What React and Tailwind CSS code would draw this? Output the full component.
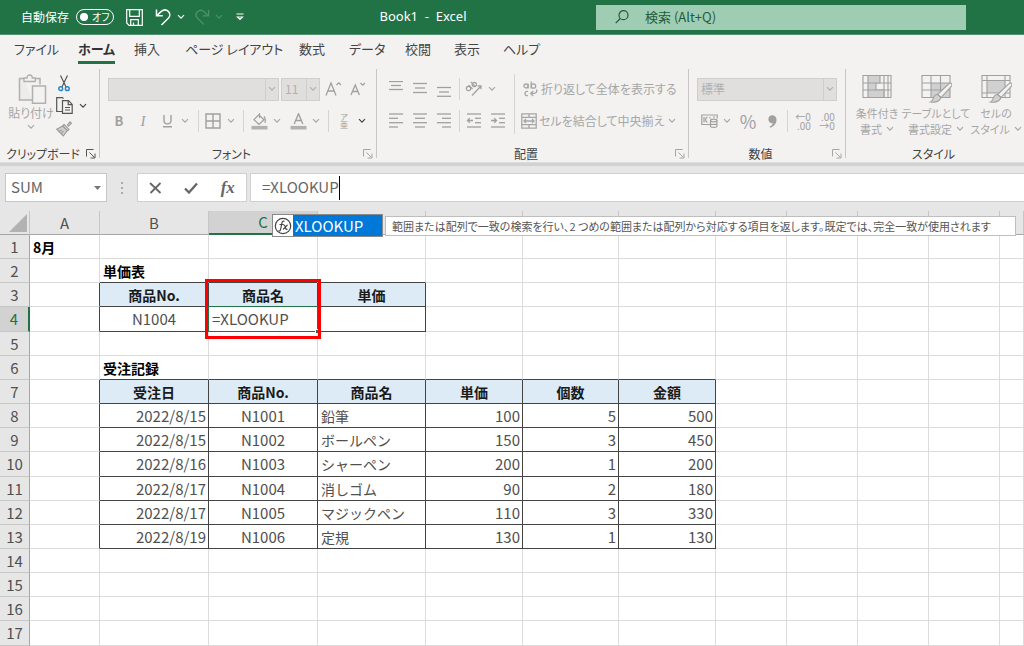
import React, { useState } from 'react'

const columns = [
    { name: 'A', width: 'w-[70px]' },
    { name: 'B', width: 'w-[109px]' },
    { name: 'C', width: 'w-[109px]' },
    { name: 'D', width: 'w-[108px]' },
    { name: 'E', width: 'w-[97px]' },
    { name: 'F', width: 'w-[96px]' },
    { name: 'G', width: 'w-[97px]' },
    { name: 'H', width: 'w-[71px]' },
    { name: 'I', width: 'w-[71px]' },
    { name: 'J', width: 'w-[71px]' },
    { name: 'K', width: 'w-[71px]' },
    { name: 'L', width: '' },
]

// letters that stay readable while the suggestion is open
const openLetters = ['A', 'B', 'C']

const orders = [
    ['2022/8/15', 'N1001', '鉛筆', 100, 5, 500],
    ['2022/8/15', 'N1002', 'ボールペン', 150, 3, 450],
    ['2022/8/16', 'N1003', 'シャーペン', 200, 1, 200],
    ['2022/8/17', 'N1004', '消しゴム', 90, 2, 180],
    ['2022/8/17', 'N1005', 'マジックペン', 110, 3, 330],
    ['2022/8/19', 'N1006', '定規', 130, 1, 130],
]

// cell contents, keyed by address
const cells = {
    A1: { text: '8月', kind: 'title' },
    B2: { text: '単価表', kind: 'title' },
    B3: { text: '商品No.', kind: 'head' },
    C3: { text: '商品名', kind: 'head' },
    D3: { text: '単価', kind: 'head' },
    B4: { text: 'N1004', kind: 'code' },
    C4: { text: '=XLOOKUP', kind: 'edit' },
    D4: { text: '', kind: 'number' },
    B6: { text: '受注記録', kind: 'title' },
}

const orderKinds = ['number', 'code', 'text', 'number', 'number', 'number']
const orderHeads = ['受注日', '商品No.', '商品名', '単価', '個数', '金額']
orderHeads.forEach((text, i) => {
    cells['BCDEFG'[i] + 7] = { text, kind: 'head' }
})
orders.forEach((order, r) => {
    order.forEach((text, i) => {
        cells['BCDEFG'[i] + (8 + r)] = { text, kind: orderKinds[i] }
    })
})

const kindStyles = {
    title: 'text-left text-sm font-bold text-black whitespace-nowrap',
    head: 'text-center text-sm font-bold text-[#1a1a1a] bg-[#ddebf7]',
    code: 'text-center text-[15px] text-[#505050]',
    text: 'text-left text-sm text-[#505050]',
    number: 'text-right text-[15px] text-[#505050]',
    edit: 'text-left text-[15px] text-[#505050]',
}

const isBoxed = (col, row) => {
    const cell = col && cells[col.name + row]
    return Boolean(cell) && cell.kind !== 'title'
}

const tabs = [
    { name: 'ファイル', width: 'w-16' },
    { name: 'ホーム', width: 'w-14' },
    { name: '挿入', width: 'w-[51px]' },
    { name: 'ページ レイアウト', width: 'w-[114px]' },
    { name: '数式', width: 'w-[50px]' },
    { name: 'データ', width: 'w-14' },
    { name: '校閲', width: 'w-[49px]' },
    { name: '表示', width: 'w-[49px]' },
    { name: 'ヘルプ', width: 'w-14' },
]

const Chevron = ({ className = 'text-[#a6a6a6]' }) => (
    <svg width="8" height="6" viewBox="0 0 8 6" className={className} fill="none" stroke="currentColor" strokeWidth="1.2">
        <path d="M1 1.2l3 3 3-3" />
    </svg>
)

const More = ({ label, className }) => (
    <button type="button" aria-label={label} className="flex h-5 w-[18px] shrink-0 items-center justify-center">
        <Chevron className={className} />
    </button>
)

const Tool = ({ label, className = '', children }) => (
    <button
        type="button"
        aria-label={label}
        className={`flex h-6 w-[18px] shrink-0 items-center justify-center text-[#a0a0a0] ${className}`}
    >
        {children}
    </button>
)

const Sep = ({ className = '' }) => <span className={`h-[22px] w-px shrink-0 bg-[#d6d4d2] ${className}`} />

const Launcher = ({ label, dark }) => (
    <button type="button" aria-label={label} className={dark ? 'text-[#555]' : 'text-[#a6a6a6]'}>
        <svg width="10" height="10" viewBox="0 0 10 10" fill="none" stroke="currentColor">
            <path d="M.5 7.5v-7h7M3.5 3.5l5 5M9 4.5v4.5H4.5" />
        </svg>
    </button>
)

const Group = ({ title, launcher, dark, last, className, children }) => (
    <section className={`flex h-24 ${className}`}>
        <div className="flex min-w-0 flex-1 flex-col">
            <div className="h-[72px] pt-2">{children}</div>
            <footer className="mt-2 flex h-4 items-center pr-[3px]">
                <h2 className="flex-1 text-center text-xs whitespace-nowrap text-[#444]">{title}</h2>
                {launcher && <Launcher label={launcher} dark={dark} />}
            </footer>
        </div>
        {!last && <span className="mt-[3px] h-[89px] w-px bg-[#c8c6c4]" />}
    </section>
)

const Picker = ({ label, value, className }) => (
    <span className={`relative flex h-[23px] border border-[#d0cecc] bg-[#e1dfdd] ${className}`}>
        <select
            aria-label={label}
            defaultValue={value}
            disabled
            className="w-full appearance-none bg-transparent pl-[3px] text-xs text-[#b0b0b0] opacity-100"
        >
            <option value={value}>{value}</option>
        </select>
        <span className="pointer-events-none absolute inset-y-0 right-0 flex w-[13px] items-center justify-center border-l border-[#d0cecc]">
            <Chevron className="text-[#b0b0b0]" />
        </span>
    </span>
)

// horizontal strokes given as [x1, x2, y]
const Lines = ({ rows, children }) => (
    <svg width="16" height="16" viewBox="0 0 16 16" fill="none" stroke="currentColor" strokeWidth="1.3">
        {rows.map(([x1, x2, y]) => (
            <path key={y} d={`M${x1} ${y}H${x2}`} />
        ))}
        {children}
    </svg>
)

const TitleBar = () => {
    const [autoSave, setAutoSave] = useState(false)

    return (
        <header className="flex h-[35px] items-center border-b border-[#4f9070] bg-[#217346] text-white">
            <div className="flex w-[250px] shrink-0 items-center pl-[21px]">
                <label className="flex items-center gap-[7px] text-xs">
                    自動保存
                    <input
                        type="checkbox"
                        className="sr-only"
                        checked={autoSave}
                        onChange={(e) => setAutoSave(e.target.checked)}
                    />
                    <span className="flex h-4 w-[38px] items-center gap-1 rounded-full border border-white pl-[3px] text-[10px]">
                        <span className="size-2 rounded-full bg-white" />
                        {autoSave ? 'オン' : 'オフ'}
                    </span>
                </label>
                <button type="button" aria-label="上書き保存" className="ml-3">
                    <svg width="17" height="17" viewBox="0 0 17 17" fill="none" stroke="currentColor" strokeWidth="1.2">
                        <path d="M.7.7h15.6v15.6H3L.7 14z" />
                        <path d="M3.7.7v6.6h9.6V.7M4.7 16.3v-5.6h7.6v5.6M7.5 16v-2.5" />
                    </svg>
                </button>
                <button type="button" aria-label="元に戻す" className="ml-3">
                    <svg width="17" height="18" viewBox="0 0 17 18" fill="none" stroke="currentColor" strokeWidth="1.5">
                        <path d="M1.5 1.5v6.3h6.3" />
                        <path d="M1.8 7.6L6 3.6c2.4-2 5.4-2 7.3-.2 2 2 2 4.8 0 6.800L6.5 17" />
                    </svg>
                </button>
                <More label="元に戻すの一覧" className="text-white" />
                <button type="button" aria-label="やり直し" className="ml-1 text-[#4d9069]">
                    <svg width="16" height="18" viewBox="0 0 17 18" fill="none" stroke="currentColor" strokeWidth="1.4">
                        <path d="M15.5 1.5v6.3H9.2" />
                        <path d="M15.2 7.6L11 3.600c-2.4-2-5.4-2-7.3-.2-2 2-2 4.800 0 6.800L10.500 17" />
                    </svg>
                </button>
                <More label="やり直しの一覧" className="text-[#4d9069]" />
                <button type="button" aria-label="クイック アクセス ツール バーのカスタマイズ" className="ml-2">
                    <svg width="8" height="8" viewBox="0 0 8 8" fill="none" stroke="currentColor" strokeWidth="1.2">
                        <path d="M.5 1h7M1.5 4h5L4 6.500z" />
                    </svg>
                </button>
            </div>
            <h1 className="flex-1 text-center font-['Noto_Sans','Noto_Sans_CJK_JP',sans-serif] text-[13px] whitespace-pre">
                Book1  -  Excel
            </h1>
            <label className="mr-[58px] flex h-[25px] w-[370px] items-center gap-4 bg-[#9fcdb3] pl-[19px] text-[#1f5c3a]">
                <svg width="14" height="14" viewBox="0 0 14 14" fill="none" stroke="currentColor" strokeWidth="1.2">
                    <circle cx="8.5" cy="5.2" r="4.5" />
                    <path d="M5.3 8.5L.7 13.2" />
                </svg>
                <input
                    type="search"
                    aria-label="検索"
                    placeholder="検索 (Alt+Q)"
                    className="min-w-0 flex-1 text-[13px] outline-none placeholder:text-[#1f5c3a]"
                />
            </label>
        </header>
    )
}

const Tabs = () => (
    <nav className="flex h-[31px] items-center pl-[14px] text-[13px] text-[#444]">
        {tabs.map((tab) => (
            <span key={tab.name} className={`shrink-0 ${tab.width}`}>
                <button
                    type="button"
                    className={
                        tab.name === 'ホーム'
                            ? 'h-[27px] border-b-[3px] border-[#217346] font-bold whitespace-nowrap text-[#333]'
                            : 'h-[27px] border-b-[3px] border-transparent whitespace-nowrap'
                    }
                >
                    {tab.name}
                </button>
            </span>
        ))}
    </nav>
)

const Clipboard = () => (
    <Group title="クリップボード" launcher="クリップボードの設定" dark className="w-[100px] shrink-0">
        <div className="flex pl-2">
            <button type="button" className="flex w-[46px] flex-col items-center text-xs text-[#a6a6a6]">
                <svg width="32" height="31" viewBox="0 0 32 31" fill="none" stroke="#b0b0b0">
                    <path d="M9 4.500H4.500v21.500H17M20 4.500h5v6" strokeWidth="1.500" fill="#ececeb" />
                    <path d="M9 7.500V4h3c0-2 1.200-3 2.700-3s2.600 1 2.600 3h3v3.500z" strokeWidth="1.300" fill="#f3f2f1" />
                    <path d="M17.500 12h13v17.300h-13z" strokeWidth="1.500" fill="#f3f2f1" />
                </svg>
                <span className="leading-4 whitespace-nowrap">貼り付け</span>
                <span className="flex h-3 items-center">
                    <Chevron />
                </span>
            </button>
            <div className="flex flex-col gap-px">
                <button type="button" aria-label="切り取り" className="flex h-[18px] w-5 items-center justify-center">
                    <svg width="12" height="17" viewBox="0 0 12 17" fill="none" strokeWidth="1.2">
                        <path d="M2.5.5l5.7 11.700M9.500.5L3.800 12.200" stroke="#555" />
                        <circle cx="2.700" cy="13.700" r="1.900" stroke="#2b88c9" strokeWidth="1.500" />
                        <circle cx="9.300" cy="13.700" r="1.900" stroke="#2b88c9" strokeWidth="1.500" />
                    </svg>
                </button>
                <div className="flex h-[25px] items-center">
                    <button type="button" aria-label="コピー" className="flex w-5 justify-center">
                        <svg width="17" height="17" viewBox="0 0 17 17" fill="none" stroke="#555" strokeWidth="1.200">
                            <path d="M6 14.500H.7V.7h5.800l1 1" />
                            <path d="M6.500 3.700h6l3.700 3.700v8.900H6.500z" />
                            <path d="M12.200 4v3.700H16M9 10.500h5M9 13h5" />
                        </svg>
                    </button>
                    <More label="コピーの一覧" className="text-[#444]" />
                </div>
                <button type="button" aria-label="書式のコピー/貼り付け" className="flex h-5 w-5 items-center justify-center">
                    <svg width="16" height="16" viewBox="0 0 16 16" fill="none" stroke="#999" strokeWidth="1.100">
                        <path d="M11 4.500l3-3.700 1.500 1.500L12 5.500" fill="#d8d8d8" />
                        <path d="M8 3.500l5 5-1.300 1.300-5-5z" fill="#f3f2f1" />
                        <path d="M6.700 5L.8 8.300l6.500 6.700 4-5.500z" fill="#cfcfcf" />
                        <path d="M3 10.500l2.800-1.500M5 12.700l2.500-2.500" />
                    </svg>
                </button>
            </div>
        </div>
    </Group>
)

const FontGroup = () => (
    <Group title="フォント" launcher="フォントの設定" className="w-[277px] shrink-0">
        <div className="flex h-[30px] items-center pl-2">
            <Picker label="フォント名" value="" className="w-[171px]" />
            <Picker label="フォント サイズ" value="11" className="ml-0.5 w-[39px]" />
            <Tool label="フォント サイズの拡大" className="ml-1">
                <svg width="17" height="16" viewBox="0 0 17 16" fill="none" stroke="currentColor" strokeWidth="1.3">
                    <path d="M1 14.500L6 2l5 12.500M2.800 10h6.400M11.500 4l2.300-2.200L16 4" />
                </svg>
            </Tool>
            <Tool label="フォント サイズの縮小" className="ml-[7px]">
                <svg width="16" height="14" viewBox="0 0 16 14" fill="none" stroke="currentColor" strokeWidth="1.3">
                    <path d="M1 13l4.200-10 4.200 10M2.500 9.500h5.400M10.500 1l2.200 2.200L15 1" />
                </svg>
            </Tool>
        </div>
        <div className="flex h-[34px] items-center pl-[10px]">
            <Tool label="太字">
                <span className="text-[13px] font-bold">B</span>
            </Tool>
            <Tool label="斜体" className="ml-1.5">
                <span className="font-['Liberation_Serif',serif] text-[15px] italic">I</span>
            </Tool>
            <Tool label="下線" className="ml-1.5">
                <svg width="11" height="14" viewBox="0 0 11 14" fill="none" stroke="currentColor" strokeWidth="1.4">
                    <path d="M2 1v5.500c0 4.500 7 4.500 7 0V1M1 12.700h9" />
                </svg>
            </Tool>
            <More label="下線の種類" />
            <Sep className="ml-1" />
            <Tool label="罫線" className="ml-[5px]">
                <svg width="16" height="16" viewBox="0 0 16 16" fill="none" stroke="currentColor" strokeWidth="1.4">
                    <path d="M1 1h14v14H1zM8 1v14M1 8h14" />
                </svg>
            </Tool>
            <More label="罫線の種類" />
            <Sep className="ml-[3px]" />
            <Tool label="塗りつぶしの色" className="ml-1.5">
                <svg width="17" height="17" viewBox="0 0 17 17" fill="none" stroke="currentColor" strokeWidth="1.2">
                    <path d="M8 2l5 4.700-5 4.800-5-4.800L8.500 1v4M13 3.500c1.500 1.500 1.500 4 1 6.500" />
                    <path d="M.5 14.700h16" stroke="#b3b0ad" strokeWidth="3.6" />
                </svg>
            </Tool>
            <More label="塗りつぶしの色の一覧" />
            <Tool label="フォントの色" className="ml-[3px]">
                <svg width="17" height="17" viewBox="0 0 17 17" fill="none" stroke="currentColor" strokeWidth="1.4">
                    <path d="M4.200 11L8.500.8 12.800 11M5.800 7.500h5.400" />
                    <path d="M.5 14.700h16" stroke="#b3b0ad" strokeWidth="3.6" />
                </svg>
            </Tool>
            <More label="フォントの色の一覧" />
            <Sep className="ml-[3px]" />
            <Tool label="ふりがな" className="ml-1.5">
                <span className="flex flex-col items-center text-[8px] leading-[8px]">
                    <span>ア</span>
                    <span>亜</span>
                </span>
            </Tool>
            <More label="ふりがなの設定" className="text-[#444]" />
        </div>
    </Group>
)

const Alignment = () => (
    <Group title="配置" launcher="配置の設定" className="w-[312px] shrink-0">
        <div className="flex">
            <div className="pl-[10px]">
                <div className="flex h-[30px] items-center">
                    <Tool label="上揃え">
                        <Lines rows={[[1, 15, 0.5], [3, 13, 4.5], [1, 15, 8.5]]} />
                    </Tool>
                    <Tool label="上下中央揃え" className="ml-1.5">
                        <Lines rows={[[1, 15, 2.5], [3, 13, 7], [1, 15, 11.5]]} />
                    </Tool>
                    <Tool label="下揃え" className="ml-1.5">
                        <Lines rows={[[1, 15, 6.5], [3, 13, 11], [1, 15, 15.3]]} />
                    </Tool>
                    <Sep className="ml-1.5" />
                    <Tool label="方向" className="ml-[5px]">
                        <svg width="18" height="16" viewBox="0 0 18 16" fill="none" stroke="currentColor" strokeWidth="1.2">
                            <circle cx="3.500" cy="7.500" r="2.200" />
                            <path d="M3.500 4l4 4M5.800.8l4.800 5" />
                            <circle cx="9.300" cy="3.500" r="2.100" />
                            <path d="M7 14.500L16 5M12.500 4.800H16v3.500" />
                        </svg>
                    </Tool>
                    <More label="方向の一覧" />
                </div>
                <div className="flex h-[34px] items-center">
                    <Tool label="左揃え">
                        <Lines rows={[[1, 15, 1], [1, 10, 5.3], [1, 15, 9.7], [1, 10, 14]]} />
                    </Tool>
                    <Tool label="中央揃え" className="ml-1.5">
                        <Lines rows={[[1, 15, 1], [3, 13, 5.3], [1, 15, 9.7], [3, 13, 14]]} />
                    </Tool>
                    <Tool label="右揃え" className="ml-1.5">
                        <Lines rows={[[1, 15, 1], [6, 15, 5.3], [1, 15, 9.7], [6, 15, 14]]} />
                    </Tool>
                    <Sep className="ml-1.5" />
                    <Tool label="インデントを減らす" className="ml-[5px]">
                        <Lines rows={[[1, 15, 1], [9, 15, 5.3], [9, 15, 9.7], [1, 15, 14]]}>
                            <path d="M7 7.500H1.500M3.800 5.300L1.500 7.500l2.300 2.300" />
                        </Lines>
                    </Tool>
                    <Tool label="インデントを増やす" className="ml-1.5">
                        <Lines rows={[[1, 15, 1], [9, 15, 5.3], [9, 15, 9.7], [1, 15, 14]]}>
                            <path d="M1 7.500h5.500M4.200 5.300l2.300 2.200-2.300 2.300" />
                        </Lines>
                    </Tool>
                </div>
            </div>
            <span className="ml-[7px] h-[60px] w-px bg-[#d6d4d2]" />
            <div className="pl-1.5 text-xs text-[#a6a6a6]">
                <button type="button" className="flex h-[30px] items-center gap-0.5 whitespace-nowrap">
                    <span className="flex w-[18px] justify-center">
                        <svg width="15" height="16" viewBox="0 0 15 16" fill="none" stroke="currentColor" strokeWidth="1.3">
                            <circle cx="3" cy="5" r="2" />
                            <path d="M5.200 2.700v4.800M8.200.5v7" />
                            <circle cx="10.500" cy="5" r="2.200" />
                            <path d="M5 10.500c-4-1.500-4 5.500 0 4M13.500 8.500c1 2.500 0 4-5.500 4M10.200 10l-2.500 2.500 2.500 2.500" />
                        </svg>
                    </span>
                    折り返して全体を表示する
                </button>
                <div className="flex h-[34px] items-center">
                    <button type="button" className="flex w-[142px] items-center gap-0.5 whitespace-nowrap">
                        <span className="flex w-[18px] justify-center">
                            <svg width="16" height="16" viewBox="0 0 16 16" fill="none" stroke="currentColor" strokeWidth="1.3">
                                <path d="M.8.8h14.400v14.400H.8zM.8 4.300h14.400M.8 11.700h14.400M8 .8v3.500M8 11.700v3.500" />
                                <path d="M3 8h10M5 6L3 8l2 2M11 6l2 2-2 2" />
                            </svg>
                        </span>
                        セルを結合して中央揃え
                    </button>
                    <More label="セル結合の一覧" />
                </div>
            </div>
        </div>
    </Group>
)

const NumberGroup = () => (
    <Group title="数値" launcher="表示形式の設定" className="w-[157px] shrink-0">
        <div className="flex h-[30px] items-center pl-2">
            <Picker label="表示形式" value="標準" className="w-[140px]" />
        </div>
        <div className="flex h-[34px] items-center pl-[11px]">
            <Tool label="通貨表示形式">
                <svg width="17" height="14" viewBox="0 0 17 14" fill="none" stroke="currentColor" strokeWidth="1.2">
                    <path d="M9 10.500H.8V1h15.400v3.500M3 3v5.500M6.500 3.300c-2.500-.3-2.500 5 0 4.700M9 3v1.500M12 3h2" />
                    <ellipse cx="12.700" cy="6.500" rx="3.200" ry="1.300" />
                    <path d="M9.500 6.500v5.700c0 1.500 6.400 1.500 6.400 0V6.500M9.500 9.500c0 1.300 6.400 1.300 6.400 0" />
                </svg>
            </Tool>
            <More label="通貨の一覧" />
            <Tool label="パーセント スタイル" className="ml-[3px]">
                <span className="text-lg">%</span>
            </Tool>
            <Tool label="桁区切りスタイル" className="ml-1.5">
                <svg width="9" height="13" viewBox="0 0 9 13" fill="currentColor">
                    <path d="M4 .3c2.700 0 4.500 1.700 4.500 4.500 0 3.800-2.500 6.700-6.500 8l-.5-1c2-1 3.100-2.200 3.300-3.500C2.400 8.500.4 6.800.4 4.200.4 2 2 .3 4 .3z" />
                </svg>
            </Tool>
            <Sep className="ml-1.5" />
            <Tool label="小数点以下の表示桁数を増やす" className="ml-1.5">
                <span className="flex flex-col items-end text-[10px] leading-[9px]">
                    <span>←0</span>
                    <span>.00</span>
                </span>
            </Tool>
            <Tool label="小数点以下の表示桁数を減らす" className="ml-1.5">
                <span className="flex flex-col items-end text-[10px] leading-[9px]">
                    <span>.00</span>
                    <span>→0</span>
                </span>
            </Tool>
        </div>
    </Group>
)

const StyleButton = ({ lines, className, children }) => (
    <button
        type="button"
        className={`flex shrink-0 flex-col items-center text-[11px] leading-4 whitespace-nowrap text-[#a6a6a6] ${className}`}
    >
        <svg width="32" height="31" viewBox="0 0 32 31" fill="none" stroke="#a0a0a0" strokeWidth="1.1">
            {children}
        </svg>
        <span>{lines[0]}</span>
        <span className="flex items-center gap-1">
            {lines[1]}
            <Chevron />
        </span>
    </button>
)

const Brush = () => (
    <>
        <path d="M31.500 9.500c.8.800.7 1.800 0 2.700L21 23.500l-3.500-3L29 9.700c.8-.8 1.700-.8 2.500-.2z" fill="#f3f2f1" />
        <path d="M17.500 20.500l3.500 3c-1.500 4-5.500 5.300-10.500 4.500 2.500-1 2.300-3 3.300-5 .7-1.700 2-2.700 3.700-2.500z" fill="#d0d0d0" />
    </>
)

const StyleGroup = () => (
    <Group title="スタイル" last className="min-w-[178px] flex-1 overflow-hidden">
        <div className="flex pl-0.5">
            <StyleButton lines={['条件付き', '書式']} className="w-[58px]">
                <path d="M2 1.500h28v22H2zM2 9h28M2 16h28M23 1.500v22M27 1.500v22" />
                <path d="M7 1.500h12V9h-4v7h8v7.500H7z" fill="#d0d0d0" />
                <path d="M7 9h8M7 16h8" />
            </StyleButton>
            <StyleButton lines={['テーブルとして', '書式設定']} className="w-[60px]">
                <path d="M11 9h19v14.500H11z" fill="#d0d0d0" stroke="none" />
                <path d="M2 1.500h28v22H2zM2 9h28M2 16h28M11 1.500v22M20.500 1.500v22" />
                <Brush />
            </StyleButton>
            <StyleButton lines={['セルの', 'スタイル']} className="w-[60px]">
                <path d="M7 6.500h18V19H7z" fill="#d0d0d0" stroke="none" />
                <path d="M2 1.500h28v22H2zM2 6.500h28M2 19h28M7 1.500v22M25 1.500v22" />
                <Brush />
            </StyleButton>
        </div>
    </Group>
)

const FormulaBar = ({ formula, setFormula }) => (
    <div className="flex h-[45px] items-start bg-[#e6e6e6] pt-[7px] pl-[5px] text-[15px] text-[#666]">
        <div className="flex h-[29px] w-[102px] shrink-0 items-center border border-[#c6c6c6] bg-white px-[5px]">
            <input aria-label="名前ボックス" defaultValue="SUM" className="min-w-0 flex-1 outline-none" />
            <button type="button" aria-label="名前の一覧">
                <svg width="7" height="4" viewBox="0 0 7 4" fill="#777">
                    <path d="M0 0h7L3.500 4z" />
                </svg>
            </button>
        </div>
        <span className="flex h-[29px] w-[30px] shrink-0 flex-col items-center justify-center gap-[3px]">
            <span className="size-0.5 bg-[#aaa]" />
            <span className="size-0.5 bg-[#aaa]" />
            <span className="size-0.5 bg-[#aaa]" />
        </span>
        <div className="flex h-[29px] w-[110px] shrink-0 items-center justify-around border border-[#d0d0d0] bg-white">
            <button type="button" aria-label="キャンセル">
                <svg width="13" height="12" viewBox="0 0 13 12" fill="none" stroke="#666" strokeWidth="1.8">
                    <path d="M1 1l10.500 10M11.500 1L1.500 11" />
                </svg>
            </button>
            <button type="button" aria-label="入力">
                <svg width="14" height="12" viewBox="0 0 14 12" fill="none" stroke="#666" strokeWidth="2.3">
                    <path d="M1 6.500l4 4L13 1.500" />
                </svg>
            </button>
            <button
                type="button"
                aria-label="関数の挿入"
                className="font-['Liberation_Serif',serif] text-[17px] leading-5 font-bold italic"
            >
                fx
            </button>
        </div>
        <div className="ml-[3px] flex h-[29px] flex-1 items-center border border-r-0 border-[#d0d0d0] bg-white pl-[11px]">
            <input
                aria-label="数式バー"
                value={formula}
                onChange={(e) => setFormula(e.target.value)}
                className="field-sizing-content outline-none"
            />
            <span className="h-6 w-px bg-black" />
        </div>
    </div>
)

const Cell = ({ col, next, row, formula }) => {
    const cell = cells[col.name + row]
    const right = isBoxed(col, row) || isBoxed(next, row) ? 'border-r-[#444]' : 'border-r-[#dcdcdc]'
    const bottom = isBoxed(col, row) || isBoxed(col, row + 1) ? 'border-b-[#444]' : 'border-b-[#dcdcdc]'
    const padding = cell && cell.kind === 'number' ? 'px-0.5' : 'px-[3px]'

    return (
        <td className={`relative border-r border-b py-0 leading-5 ${padding} ${right} ${bottom} ${cell ? kindStyles[cell.kind] : ''}`}>
            {cell && cell.kind === 'edit' ? formula : cell && cell.text}
            {cell && cell.kind === 'edit' && (
                <>
                    <span className="absolute -inset-px z-10 border border-[#217346]" />
                    <span className="absolute -right-0.5 -bottom-0.5 z-10 size-1 border-t border-l border-white bg-[#217346]" />
                    <span className="absolute -inset-x-1 -top-7 -bottom-2 z-10 border-[3px] border-[#fe0000]" />
                </>
            )}
        </td>
    )
}

const Sheet = ({ formula }) => {
    // these rows are a pixel taller than the rest
    const tallRows = [4, 10, 17]
    const rows = Array.from({ length: 17 }, (_, i) => i + 1)

    return (
        <main className="relative bg-white">
            <table className="w-full table-fixed border-separate border-spacing-0 text-[#505050]">
                <colgroup>
                    <col className="w-[30px]" />
                    {columns.map((col) => (
                        <col key={col.name} className={col.width} />
                    ))}
                </colgroup>
                <thead>
                    <tr className="h-6 bg-[#e6e6e6] text-[15px] leading-5">
                        <td className="border-r border-b border-r-[#c6c6c6] border-b-[#a6a6a6] p-0">
                            <svg width="18" height="18" viewBox="0 0 18 18" className="ml-[9px]" fill="#b2b2b2">
                                <path d="M18 0v18H0z" />
                            </svg>
                        </td>
                        {columns.map((col) => (
                            <th
                                key={col.name}
                                scope="col"
                                aria-label={col.name}
                                className={
                                    col.name === 'C'
                                        ? 'border-r border-b-2 border-r-[#c6c6c6] border-b-[#217346] bg-[#d2d2d2] p-0 font-normal text-[#217346]'
                                        : 'border-r border-b border-r-[#c6c6c6] border-b-[#a6a6a6] p-0 font-normal'
                                }
                            >
                                {openLetters.includes(col.name) && col.name}
                            </th>
                        ))}
                    </tr>
                </thead>
                <tbody>
                    {rows.map((row) => (
                        <tr key={row} className={tallRows.includes(row) ? 'h-[25px]' : 'h-6'}>
                            <th
                                scope="row"
                                className={
                                    row === 4
                                        ? 'border-r-2 border-b border-r-[#217346] border-b-[#c6c6c6] bg-[#d2d2d2] p-0 text-[15px] leading-5 font-normal text-[#217346]'
                                        : 'border-r border-b border-r-[#a6a6a6] border-b-[#c6c6c6] bg-[#e6e6e6] p-0 text-[15px] leading-5 font-normal'
                                }
                            >
                                {row}
                            </th>
                            {columns.map((col, i) => (
                                <Cell key={col.name} col={col} next={columns[i + 1]} row={row} formula={formula} />
                            ))}
                        </tr>
                    ))}
                </tbody>
            </table>

            {/* function suggestion, floats over the column headers */}
            <div className="absolute top-[3px] left-[272px] z-20 flex items-center gap-0.5">
                <button type="button" className="flex h-[23px] w-[111px] items-center border border-[#8a8a8a] bg-white text-[15px] text-white">
                    <span className="flex h-full w-5 items-center justify-center">
                        <svg width="18" height="18" viewBox="0 0 18 18" fill="none" stroke="#444" strokeWidth="1.2">
                            <circle cx="9" cy="9" r="7.700" />
                            <path d="M10.500 4.300c-2-.8-2.500 1-2.800 2.700l-1 5c-.3 1.700-1 2.300-2.200 1.800M5.500 7.500h4M9.500 8.200c1.300-.5 1.500 1 2 2.500s.8 2 2 1.300M13.700 8.200c-1.500 0-3.200 4-4.700 4" />
                        </svg>
                    </span>
                    <span className="flex h-full flex-1 items-center bg-[#0078d7] pl-0.5 leading-5">XLOOKUP</span>
                </button>
                <div
                    role="tooltip"
                    className="h-5 w-[631px] border border-[#bebebe] bg-white pl-1.5 text-[11px] leading-[18px] whitespace-nowrap text-[#555] [font-feature-settings:'palt']"
                >
                    範囲または配列で一致の検索を行い、2 つめの範囲または配列から対応する項目を返します。既定では、完全一致が使用されます
                </div>
            </div>
        </main>
    )
}

const App = () => {
    const [formula, setFormula] = useState('=XLOOKUP')

    return (
        <div lang="ja" className="overflow-hidden bg-[#f3f2f1] font-['Noto_Sans_CJK_JP',sans-serif]">
            <div className="[font-feature-settings:'palt']">
                <TitleBar />
                <Tabs />
                <div className="flex">
                    <Clipboard />
                    <FontGroup />
                    <Alignment />
                    <NumberGroup />
                    <StyleGroup />
                </div>
            </div>
            <div className="h-1 border-t border-[#dcdcdc] bg-[#d2d2d2]" />
            <FormulaBar formula={formula} setFormula={setFormula} />
            <Sheet formula={formula} />
        </div>
    )
}

export default App
